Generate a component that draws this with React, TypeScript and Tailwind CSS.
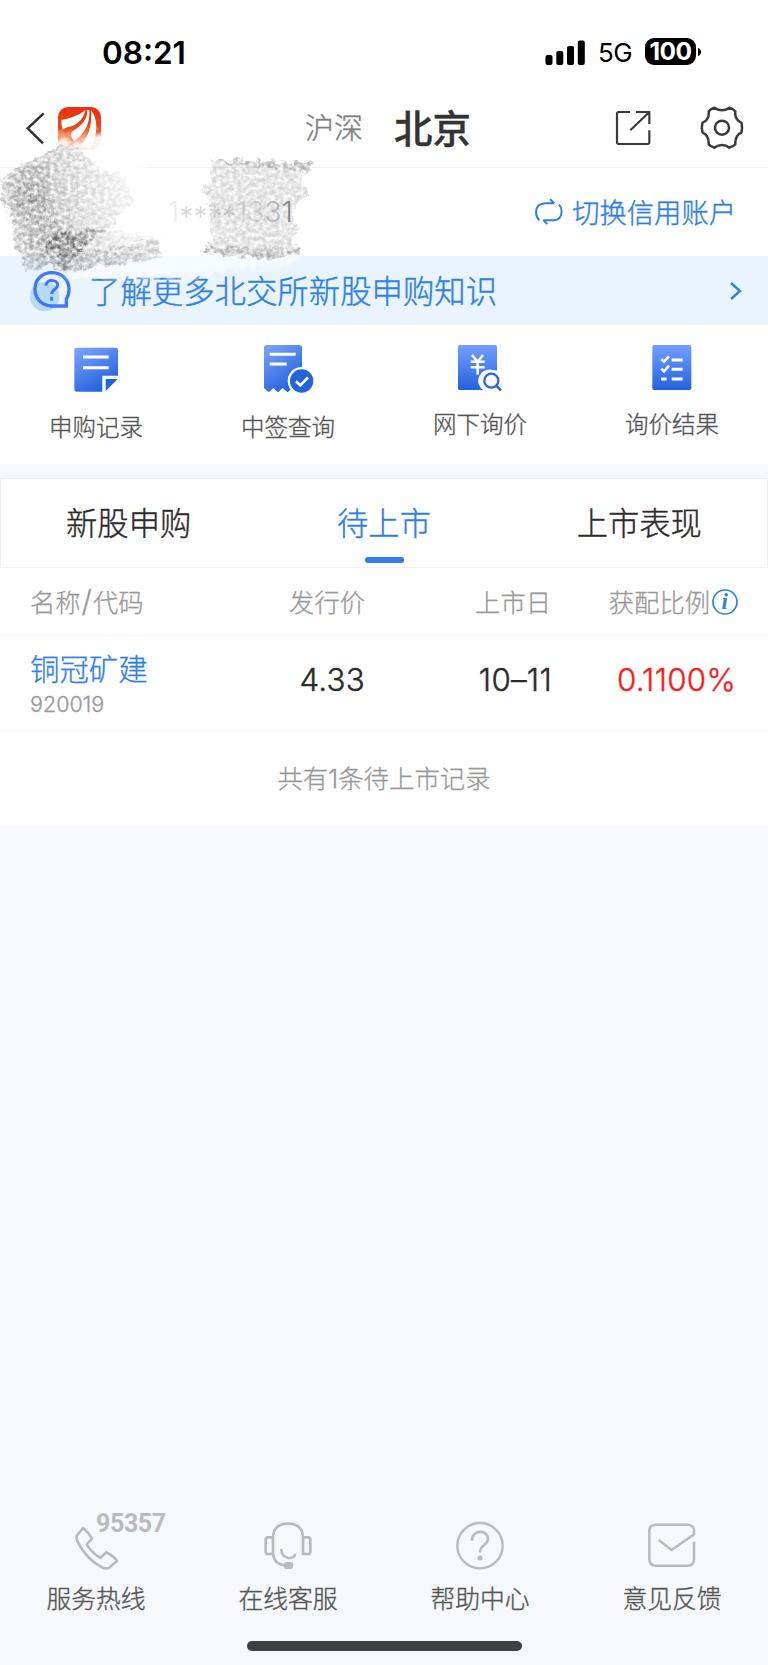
import type { ReactNode } from "react";

const GRAD = (
  <defs>
    <linearGradient id="docDiag" x1="0" y1="0" x2="0.55" y2="1">
      <stop offset="0" stopColor="#80a6ff" />
      <stop offset="1" stopColor="#2461dc" />
    </linearGradient>
    <linearGradient id="docDown" x1="0" y1="0" x2="0" y2="1">
      <stop offset="0" stopColor="#739fff" />
      <stop offset="1" stopColor="#2462de" />
    </linearGradient>
  </defs>
);

function StatusBar() {
  return (
    <div className="flex h-[89px] items-start justify-between pl-[102px] pr-[66px]">
      <span className="mt-[37px] font-['Inter'] text-[31.5px] font-semibold leading-8 text-black">08:21</span>
      <div className="mt-[38px] flex h-[27px] items-center">
        <svg width="40" height="26" viewBox="0 0 40 26" className="mr-[13px]">
          <rect x="0.5" y="16" width="7" height="10" rx="2" />
          <rect x="11.3" y="12" width="7" height="14" rx="2" />
          <rect x="22" y="7" width="7" height="19" rx="2" />
          <rect x="32.8" y="1.5" width="7" height="24.5" rx="2" />
        </svg>
        <span className="mt-[3px] w-[47px] font-['Inter'] text-[26px] leading-7 tracking-tight text-black">5G</span>
        <span className="flex h-[27px] w-[51px] items-center justify-center rounded-[9px] bg-black font-['Inter'] text-[24.5px] font-bold tracking-[-0.5px] text-white">
          100
        </span>
        <svg width="5" height="10" viewBox="0 0 5 10" className="ml-px">
          <path d="M1 1C5 2 5 8 1 9Z" />
        </svg>
      </div>
    </div>
  );
}

function NavBar() {
  return (
    <div className="flex h-[79px] items-center border-b border-[#f0f1f3] pl-[26px] pr-[24px]">
      <svg width="19" height="33" viewBox="78 336 57 99" fill="none" stroke="#2e2e2e" strokeWidth="7">
        <path d="M131 340L83 385L129 430" />
      </svg>
      <svg width="43" height="43" viewBox="0 0 129 129" className="ml-[13px]">
        <defs>
          <linearGradient id="brand" x1="0" y1="0" x2="0" y2="1">
            <stop offset="0" stopColor="#e83010" />
            <stop offset="1" stopColor="#f2641a" />
          </linearGradient>
        </defs>
        <rect width="129" height="129" rx="30" fill="url(#brand)" />
        <path d="M10 39C35 33 66 25 82 8C80 30 61 50 43 57C31 60 20 62 14 68C11 58 10 47 10 39Z" fill="#fff" />
        <path d="M88 8C89 38 70 56 43 73C37 79 39 91 48 103C68 89 98 60 94 9Z" fill="#fff" />
        <path d="M99 10C104 50 91 91 68 118L98 124C117 90 124 40 99 10Z" fill="#fff" />
      </svg>
      <div className="mb-[3px] ml-[204px] flex w-[170px] items-center">
        <span className="text-[29px] font-light leading-none text-[#808080] [-webkit-text-stroke:0.4px]">沪深</span>
        <span className="ml-[31px] text-[38.5px] font-medium leading-none text-[#333] [-webkit-text-stroke:0.4px]">北京</span>
      </div>
      <svg width="36" height="36" viewBox="693 330 108 108" fill="none" stroke="#3a3a3a" strokeWidth="6.500" className="ml-auto">
        <path d="M738 336H704Q699 336 699 341V427Q699 432 704 432H791Q796 432 796 427V391M756 336H796V372M796 336L739 391" />
      </svg>
      <svg width="44" height="44" viewBox="950 319 132 132" fill="none" stroke="#3a3a3a" strokeWidth="7.5" strokeLinejoin="round" className="ml-[49px]">
        <path d="M993 324Q1004 332 1016 332Q1028 332 1038 324Q1048 327 1056 335Q1054 351 1061 359Q1065 365 1074 369Q1078 384 1074 399Q1065 403 1061 410Q1055 420 1056 434Q1048 441 1038 444Q1028 436 1016 436Q1004 436 993 444Q983 441 976 434Q977 420 971 410Q967 403 958 399Q953 384 958 369Q967 365 971 359Q978 350 976 335Q984 327 993 324Z" />
        <circle cx="1016" cy="384" r="21" />
      </svg>
    </div>
  );
}

function AccountRow() {
  return (
    <div className="flex h-[88px] items-center justify-between bg-white pl-[168px] pr-[32px]">
      <span className="whitespace-nowrap font-['Inter'] text-[28px] font-light leading-none tracking-[0.2px] text-[#ececec]">
        1<span className="align-[-5px] leading-[0] text-[#d6d6d6]">****</span>
        <span className="text-[#dcdcdc]">13</span>
        <span className="text-[#c4c4c4]">3</span>
        <span className="text-[#858585]">1</span>
      </span>
      <div className="flex items-center text-[#2e7fe6]">
        <svg width="30" height="28" viewBox="452 114 90 84" fill="none" stroke="currentColor" strokeWidth="6">
          <path d="M513 130H485Q458 132 458 157Q458 171 468 181M500 118L513 130M480 181H510Q535 180 535 154Q535 142 527 134M480 181L492 192" />
        </svg>
        <span className="mb-px ml-[8px] text-[27.3px] font-light leading-none [-webkit-text-stroke:0.4px]">切换信用账户</span>
      </div>
    </div>
  );
}

function Banner() {
  return (
    <div className="flex h-[69px] items-center bg-[#e9f4ff] pl-[29px] pr-[26px] text-[#2e7fe6]">
      <svg width="42" height="42" viewBox="87 524 126 126" fill="none">
        <circle cx="134" cy="604" r="44" fill="#b5dafc" />
        <path d="M199 632H154C123 630 105 608 105 581C105 552 127 532 155 532C184 532 207 552 207 582C207 597 204 605 199 612Z" stroke="#3f79f7" strokeWidth="10" />
        <path d="M138 571C138 549 174 551 173 570C172 582 156 582 155 596M155 604V616" stroke="#3f79f7" strokeWidth="9" />
      </svg>
      <span className="mb-[2px] ml-[18px] text-[31.4px] font-light leading-none [-webkit-text-stroke:0.4px]">了解更多北交所新股申购知识</span>
      <svg width="13" height="20" viewBox="0 0 13 20" fill="none" stroke="currentColor" strokeWidth="2.4" className="ml-auto">
        <path d="M2 2L11 10L2 18" />
      </svg>
    </div>
  );
}

type Item = { label: string; icon: ReactNode };

const ACTIONS: Item[] = [
  {
    label: "申购记录",
    icon: (
      <svg width="60" height="56" viewBox="198 60 180 168">
        {GRAD}
        <path d="M231 83H346Q354 83 354 91V167H307V215H231Q223 215 223 207V91Q223 83 231 83Z" fill="url(#docDiag)" />
        <path d="M317 177H353L317 213Z" fill="#2461dc" />
        <path d="M249 111H326M249 143H326" stroke="#fff" strokeWidth="9" />
      </svg>
    ),
  },
  {
    label: "中签查询",
    icon: (
      <svg width="60" height="56" viewBox="774 60 180 168" fill="none">
        <path d="M799 75H898Q906 75 906 83V216L874 207L863 217L848 204L834 217L820 204L806 217L792 204V83Q792 75 799 75Z" fill="url(#docDiag)" />
        <circle cx="905" cy="183" r="42" fill="#fff" />
        <circle cx="905" cy="183" r="35" fill="#2563de" />
        <path d="M809 103H887M809 132H860" stroke="#fff" strokeWidth="9" />
        <path d="M888 184L901 196L924 172" stroke="#fff" strokeWidth="8" />
      </svg>
    ),
  },
  {
    label: "网下询价",
    icon: (
      <svg width="60" height="56" viewBox="198 60 180 168" fill="none">
        <rect x="222" y="75" width="117" height="135" rx="5" fill="url(#docDown)" />
        <path d="M264 105L281 125L297 105M260 125H302M260 142H302M281 124V164" stroke="#fff" strokeWidth="7.5" />
        <path d="M322 149A34 34 0 0 0 298 211L340 211V152Z" fill="#fff" />
        <circle cx="322" cy="182" r="21" stroke="#2a66e2" strokeWidth="7" />
        <path d="M336 196L351 211" stroke="#2a66e2" strokeWidth="8" />
      </svg>
    ),
  },
  {
    label: "询价结果",
    icon: (
      <svg width="60" height="56" viewBox="774 60 180 168" fill="none">
        <rect x="805" y="75" width="117" height="135" rx="5" fill="url(#docDown)" />
        <path d="M863 120H896M863 148H896M863 177H896M831 177H848" stroke="#fff" strokeWidth="9" />
        <path d="M832 117L840 125L855 109M832 146L840 154L855 137" stroke="#fff" strokeWidth="7.5" />
      </svg>
    ),
  },
];

function Actions() {
  return (
    <div className="grid h-[139px] grid-cols-4 bg-white pt-[15px]">
      {ACTIONS.map((a, i) => (
        <div key={a.label} className="flex flex-col items-center">
          {a.icon}
          <span
            className={`${i < 2 ? "mt-[19px]" : "mt-[16px]"} text-[23.5px] font-light leading-none text-[#555] [-webkit-text-stroke:0.35px]`}
          >
            {a.label}
          </span>
        </div>
      ))}
    </div>
  );
}

function Tabs() {
  return (
    <div className="mt-[14px] grid h-[90px] grid-cols-3 border border-[#f0f1f3] bg-white text-[31.3px] font-light leading-none text-[#2b2b2b] [-webkit-text-stroke:0.4px]">
      <span className="pt-[27px] text-center">新股申购</span>
      <div className="flex flex-col items-center pt-[27px] text-[#2e7fe6]">
        待上市
        <span className="ml-px mt-[20px] h-[6px] w-[39px] rounded-full bg-[#2e7fe6]" />
      </div>
      <span className="pt-[27px] text-center">上市表现</span>
    </div>
  );
}

function Table() {
  return (
    <div className="bg-white font-light leading-none [-webkit-text-stroke:0.3px]">
      <div className="grid h-[68px] grid-cols-[335px_186px_217px] items-center border-b border-[#f5f6f8] pl-[30px] text-[25.3px] text-[#999]">
        <div className="flex justify-between">
          <span>
            名称<span className="mx-px font-['Inter'] text-[30px] leading-[20px]">/</span>代码
          </span>
          <span>发行价</span>
        </div>
        <span className="text-right">上市日</span>
        <div className="flex items-center justify-end">
          获配比例
          <svg width="26" height="26" viewBox="985 357 77 77" className="ml-[2px] mr-[30px]">
            <circle cx="1023.500" cy="395.500" r="35.500" fill="none" stroke="#2e7fe6" strokeWidth="5" />
            <text
              x="1022.5"
              y="417"
              textAnchor="middle"
              fill="#2e7fe6"
              className="font-['Liberation_Serif',serif] text-[68px] font-bold italic [-webkit-text-stroke:0px]"
            >
              i
            </text>
          </svg>
        </div>
      </div>
      <div className="flex h-[95px] border-b border-[#f5f6f8] pl-[30px] pr-[32px] font-['Inter','Noto_Sans_CJK_SC',sans-serif]">
        <div className="w-[160px] pt-[19px]">
          <div className="text-[29.4px] text-[#2e7fe6]">铜冠矿建</div>
          <div className="mt-[10px] text-[21.5px] text-[#999]">920019</div>
        </div>
        <div className="flex flex-1 pt-[29px] text-[31.3px] tracking-[0.25px] text-[#2b2b2b] [-webkit-text-stroke:0.4px]">
          <span className="w-[175px] text-right">4.33</span>
          <span className="w-[187px] text-right">10–11</span>
          <span className="flex-1 text-right text-[#f91d1d]">0.1100%</span>
        </div>
      </div>
      <div className="flex h-[95px] items-center justify-center text-[25.4px] text-[#999]">
        <span>
          共有<span className="font-['Inter']">1</span>条待上市记录
        </span>
      </div>
    </div>
  );
}

const SUPPORT: Item[] = [
  {
    label: "服务热线",
    icon: (
      <div className="relative">
        <svg width="52" height="52" viewBox="210 90 156 156" fill="none" stroke="#bbb" strokeWidth="8" strokeLinejoin="round">
          <path d="M249 114L231 136C227 143 232 154 237 163C251 190 278 218 306 232C314 236 322 236 329 232L351 213C343 201 331 193 318 187L301 204C285 194 269 178 260 163L276 146C270 135 262 124 249 114Z" />
        </svg>
        <span className="absolute left-[26px] top-[-9px] font-['Roboto'] text-[25px] font-bold leading-none tracking-[-0.4px] text-[#bbb]">
          95357
        </span>
      </div>
    ),
  },
  {
    label: "在线客服",
    icon: (
      <svg width="52" height="52" viewBox="788 90 156 156" fill="none" stroke="#bbb" strokeWidth="8" strokeLinejoin="round" strokeLinecap="round">
        <path d="M821 192V141Q823 101 866 101Q909 101 911 141V192H926Q933 192 933 185V149Q933 142 926 142H911M821 142H806Q799 142 799 149V185Q799 192 806 192H821Q824 222 856 226M846 180C848 208 880 209 887 195" />
        <rect x="857" y="220" width="21" height="13" rx="6" fill="#bbb" />
      </svg>
    ),
  },
  {
    label: "帮助中心",
    icon: (
      <svg width="52" height="52" viewBox="210 90 156 156" fill="none" stroke="#bbb" strokeWidth="7">
        <circle cx="288" cy="167" r="68" />
        <path d="M264 152C262 117 314 118 312 148C311 164 289 164 288 187" strokeWidth="8" />
        <circle cx="288" cy="204" r="4" fill="#bbb" />
      </svg>
    ),
  },
  {
    label: "意见反馈",
    icon: (
      <svg width="52" height="52" viewBox="788 90 156 156" fill="none" stroke="#bbb" strokeWidth="7.5">
        <path d="M826 150L865 180L932 133V123Q932 104 912 104H818Q798 104 798 124V207Q798 227 818 227H912Q932 227 932 207V155" />
      </svg>
    ),
  },
];

function Support() {
  return (
    <div className="mt-auto flex h-[145px] flex-col items-center">
      <div className="grid w-full grid-cols-4">
        {SUPPORT.map((s) => (
          <div key={s.label} className="flex flex-col items-center">
            {s.icon}
            <span className="mt-[13px] text-[24.8px] font-light leading-none text-[#555] [-webkit-text-stroke:0.35px]">{s.label}</span>
          </div>
        ))}
      </div>
      <span className="mb-[14px] mt-auto h-[10px] w-[275px] rounded-full bg-[#404040]" />
    </div>
  );
}

/* Charcoal and white marker strokes that cover the account details. */
function Scribble() {
  return (
    <svg width="340" height="235" viewBox="0 0 1020 705" className="pointer-events-none absolute left-0 top-[95px]">
      <defs>
        <filter id="grain" x="-5%" y="-5%" width="110%" height="110%" colorInterpolationFilters="sRGB">
          <feTurbulence type="fractalNoise" baseFrequency="0.08" numOctaves="3" seed="11" result="n" />
          <feColorMatrix in="n" type="matrix" values="0 0 0 0 0  0 0 0 0 0  0 0 0 0 0  1.9 0 0 0 -0.38" result="a" />
          <feTurbulence type="fractalNoise" baseFrequency="0.04" numOctaves="4" seed="3" result="m" />
          <feDisplacementMap in="SourceGraphic" in2="m" scale="40" xChannelSelector="R" yChannelSelector="G" result="d" />
          <feComposite in="d" in2="a" operator="in" result="c" />
          <feGaussianBlur in="c" stdDeviation="1.3" />
        </filter>
        <filter id="soft" x="-20%" y="-20%" width="140%" height="140%">
          <feTurbulence type="fractalNoise" baseFrequency="0.04" numOctaves="3" result="n" />
          <feGaussianBlur in="SourceGraphic" stdDeviation="7" result="b" />
          <feDisplacementMap in="b" in2="n" scale="35" />
        </filter>
        <linearGradient id="blob" x1="0" y1="0.35" x2="1" y2="0.2">
          <stop offset="0" stopColor="#777" stopOpacity="0.42" />
          <stop offset="0.25" stopColor="#707070" stopOpacity="0.55" />
          <stop offset="0.5" stopColor="#888" stopOpacity="0.38" />
          <stop offset="0.85" stopColor="#999" stopOpacity="0.1" />
        </linearGradient>
        <radialGradient id="shade">
          <stop offset="0" stopColor="#555" stopOpacity="0.5" />
          <stop offset="1" stopColor="#555" stopOpacity="0" />
        </radialGradient>
        <linearGradient id="streak" x1="0.9" y1="0" x2="0.2" y2="1">
          <stop offset="0" stopColor="#555" stopOpacity="0.35" />
          <stop offset="0.5" stopColor="#444" stopOpacity="0.65" />
          <stop offset="1" stopColor="#555" stopOpacity="0.4" />
        </linearGradient>
      </defs>
      <g filter="url(#soft)" fill="#fff">
        <path d="M130 155L175 135L240 140L320 105V185H430V240H300L160 230Z" opacity="0.9" />
        <path d="M160 110H320V150H160Z" opacity="0.4" />
        <path d="M160 470H900L880 510L700 525L560 550L200 550Z" opacity="0.6" />
      </g>
      <g filter="url(#grain)">
        <path d="M180 150L235 160L275 190L285 225L375 240L400 320L345 375L330 405L475 425L480 485L340 512L190 537L155 510L75 532L65 480L38 440L45 360L8 320L0 255L50 210L110 190Z" fill="url(#blob)" />
        <ellipse cx="90" cy="310" rx="85" ry="110" fill="url(#shade)" />
        <ellipse cx="150" cy="440" rx="110" ry="80" fill="url(#shade)" opacity="0.7" />
        <path d="M165 410L320 403L245 465L195 532L162 505L180 470L140 465Z" fill="url(#streak)" />
        <path d="M220 480L478 435L480 487L190 535Z" fill="#888" opacity="0.38" />
        <path d="M633 195L942 202L932 228L900 250L928 300L885 320L880 370L905 400L870 435L908 470L820 490L608 470L640 430L630 330L603 280L640 250Z" fill="#888" opacity="0.34" />
        <path d="M635 197L940 202L925 230L780 215ZM610 452L905 462L900 480L780 490L610 474Z" fill="#555" opacity="0.3" />
      </g>
    </svg>
  );
}

export default function App() {
  return (
    <div className="relative flex h-[1665px] w-[768px] flex-col overflow-hidden bg-[#f6f8fb] font-['Noto_Sans_CJK_SC',sans-serif]">
      <div className="bg-white">
        <StatusBar />
        <NavBar />
      </div>
      <AccountRow />
      <Banner />
      <Actions />
      <Tabs />
      <Table />
      <Support />
      <Scribble />
    </div>
  );
}
